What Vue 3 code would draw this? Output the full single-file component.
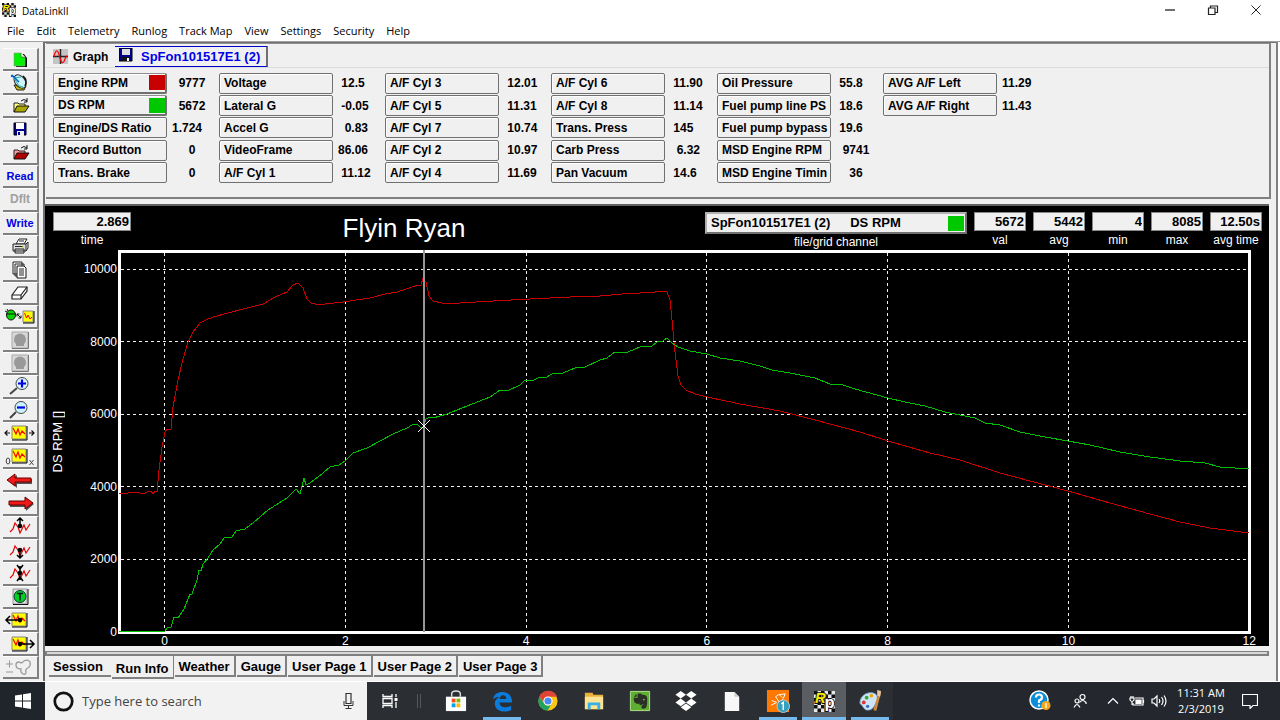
<script setup>
const menus = ['File', 'Edit', 'Telemetry', 'Runlog', 'Track Map', 'View', 'Settings', 'Security', 'Help']

const trace = (x, y) =>
  `<path d="M${x} ${y}h14v13h-14z" fill="#ff0" stroke="#888"/><path d="M${x + 15} ${y}v14h-15" fill="none" stroke="#000"/><path d="M${x + 1} ${y + 2}l3 6 2-5 2 6 2-4 3 3" fill="none" stroke="#f00" stroke-width="1.2"/>`
const folder = (body, lid) =>
  `<path d="M12 17V8h4l1 1h6v3" fill="${lid}" stroke="#222"/><path d="M12 17l3-6h12l-4 6z" fill="${body}" stroke="#111"/><path d="M19 6q3-3 6 0M25 3v4h-3" fill="none" stroke="#111"/>`
const stamp =
  '<path d="M10 3h16v16H10z" fill="#d8d8d8" stroke="#aaa"/><path d="M26.500 3v16.500H10" fill="none" stroke="#777"/><circle cx="18" cy="10.500" r="6" fill="#999"/><path d="M14 14h8v3h-8z" fill="#999"/>'
const wave = '<path d="M8 16l3-3 2-6 3 4 2 6 4-8 2 5 4-6" fill="none" stroke="#e00000" stroke-width="1.200"/>'

const tools = [
  { name: 'New', art: '<path d="M14 6h8l3 4v9H14z" fill="#111"/><path d="M12 5h7l4 4v9H12z" fill="#00f000" stroke="#999" stroke-width=".6"/><path d="M19 5v4h4" fill="#fff" stroke="#444" stroke-width=".6"/>' },
  { name: 'Telemetry link', art: '<path d="M12 13l3 5h7l2-4z" fill="#c6b800" stroke="#222"/><ellipse cx="18" cy="9.500" rx="7.500" ry="5" transform="rotate(52 18 9.500)" fill="#cdf6f8" stroke="#222"/><path d="M12 6l5 8 4 1M12 6l7-1" fill="none" stroke="#2aa"/><path d="M10 3l7 7" stroke="#06c" stroke-width="1.500"/><circle cx="10" cy="4" r="1.200" fill="#06c"/><path d="M21 4q5 4 2 10" fill="none" stroke="#111" stroke-width="1.500"/>' },
  { name: 'Open', art: folder('#a9a800', '#ffff80') },
  { name: 'Save', art: '<path d="M12 5h12v12H12z" fill="#00008b" stroke="#000"/><path d="M14 5h8v6h-8z" fill="#fff"/><path d="M15 13h7v5h-7z" fill="#eee"/><path d="M16 14h2v3h-2z" fill="#00008b"/>' },
  { name: 'Close file', art: folder('#b00000', '#ff9c9c') },
  { text: 'Read' },
  { text: 'Dflt', off: true },
  { text: 'Write' },
  { name: 'Print', art: '<path d="M14 9l3-5h8l-3 5z" fill="#fff" stroke="#222"/><path d="M11 9h13v7H11z" fill="#ddd" stroke="#222"/><path d="M24 9l2-2v6l-2 3M13 14h9v4h-9zM17 6h5M13 11.500h8" fill="none" stroke="#222"/><path d="M20 12h2" stroke="#dd0"/>' },
  { name: 'Copy pages', art: '<path d="M11 3h9v12h-9zM13 5h9v12h-9z" fill="#fff" stroke="#222"/><path d="M15 7h7l2 2v10h-9z" fill="#fff" stroke="#111"/><path d="M17 10h5M17 12h5M17 14h5M17 16h5" stroke="#222"/>' },
  { name: 'Erase', art: '<path d="M10 13l6-8h9v4l-6 8h-9z" fill="#fff" stroke="#222" stroke-width="1.200"/><path d="M10 13h9l6-8M19 13v4" fill="none" stroke="#222" stroke-width="1.200"/>' },
  { name: 'Device to graph', art: '<ellipse cx="9" cy="10" rx="4.500" ry="5" fill="#00d800" stroke="#111"/><path d="M4 9h10M5 4l1 2M3 6l2 1" stroke="#111"/><path d="M15 9l4 4M15 11.500V9h2.500M19 10.500V13h-2.500" fill="none" stroke="#111"/><path d="M21 6h10v11H21z" fill="#ff0" stroke="#888"/><path d="M32 6v12H21" fill="none" stroke="#000"/><path d="M22.500 8l2 5 1.500-3 2 4 2-2" fill="none" stroke="#f00"/>' },
  { name: 'Stamp one', off: true, art: stamp },
  { name: 'Stamp two', off: true, art: stamp },
  { name: 'Zoom in', art: '<path d="M15 13l-7 6" stroke="#444" stroke-width="2"/><circle cx="20" cy="8.500" r="6" fill="#d8f5ff" stroke="#444"/><path d="M16 8.500h8M20 4.500v8" stroke="#0000e0" stroke-width="2.200"/>' },
  { name: 'Zoom out', art: '<path d="M14 13l-6 6" stroke="#444" stroke-width="2"/><circle cx="19" cy="8.500" r="6" fill="#c9f4ff" stroke="#444"/><path d="M15 8.500h8" stroke="#0000e0" stroke-width="2.200"/>' },
  { name: 'Fit width', art: trace(10, 4) + '<path d="M3 11h5M5.500 8.500L3 11l2.500 2.500M27 11h5M29.500 8.500L32 11l-2.500 2.500" fill="none" stroke="#111" stroke-width="1.200"/>' },
  { name: 'Range from zero', art: trace(10, 3) + '<ellipse cx="6" cy="15" rx="1.800" ry="3" fill="none" stroke="#444"/><path d="M27.500 14l4 5M31.500 14l-4 5" stroke="#444"/>' },
  { name: 'Back', art: '<path d="M7 12l8-6v4h15v5H15v4z" fill="#555"/><path d="M5 11l8-6v4h16v4H13v4z" fill="#f01818" stroke="#600"/>' },
  { name: 'Forward', art: '<path d="M32 12l-8-6v4H8v5h16v4z" fill="#555"/><path d="M31 11l-8-6v4H7v4h16v4z" fill="#f01818" stroke="#600"/>' },
  { name: 'Move up', art: wave + '<path d="M18 11V2M15 5l3-3 3 3" fill="none" stroke="#000" stroke-width="1.500"/><circle cx="18" cy="10" r="2.300"/>' },
  { name: 'Move down', art: wave + '<path d="M18 10v9M15 16l3 3 3-3" fill="none" stroke="#000" stroke-width="1.500"/><circle cx="18" cy="11" r="2.300"/>' },
  { name: 'Squeeze', art: wave + '<path d="M18 4v14M15 3l3 4 3-4M15 19l3-4 3 4" fill="none" stroke="#000" stroke-width="1.500"/><circle cx="18" cy="11" r="2.300"/>' },
  { name: 'Timer', art: '<path d="M11 3h14v15H11z" fill="#ddd" stroke="#999"/><path d="M26 3v15.500H11" fill="none" stroke="#111"/><circle cx="18" cy="10.500" r="6" fill="#00d020" stroke="#033"/><path d="M15 7.500h6M18 7.500v7" stroke="#012" stroke-width="1.500"/>' },
  { name: 'Shift left', art: trace(10, 4) + '<path d="M18 11H4M8 7l-4 4 4 4" fill="none" stroke="#000" stroke-width="1.500"/><circle cx="18" cy="11" r="2.300"/>' },
  { name: 'Shift right', art: trace(10, 4) + '<path d="M18 11h13M28 7l4 4-4 4" fill="none" stroke="#000" stroke-width="1.500"/><circle cx="18" cy="11" r="2.300"/>' },
  { name: 'Track outline', off: true, art: '<path d="M4 8h7M7.500 4.500v7M4 16h7" stroke="#999"/><path d="M14 9q0-3 3-3 3 2 5-1 4-2 6 1 1 4-2 6-3 1-2 4 0 3-3 2-3-2-2-5-5 0-5-4z" fill="none" stroke="#999" stroke-width="1.300"/>' }
]

const channels = [
  [['Engine RPM', '  9777', '#c80000'], ['DS RPM', '  5672', '#00c800'], ['Engine/DS Ratio', '1.724'], ['Record Button', '     0'], ['Trans. Brake', '     0']],
  [['Voltage', ' 12.5'], ['Lateral G', ' -0.05'], ['Accel G', '  0.83'], ['VideoFrame', '86.06'], ['A/F Cyl 1', ' 11.12']],
  [['A/F Cyl 3', ' 12.01'], ['A/F Cyl 5', ' 11.31'], ['A/F Cyl 7', ' 10.74'], ['A/F Cyl 2', ' 10.97'], ['A/F Cyl 4', ' 11.69']],
  [['A/F Cyl 6', ' 11.90'], ['A/F Cyl 8', ' 11.14'], ['Trans. Press', ' 145'], ['Carb Press', '  6.32'], ['Pan Vacuum', ' 14.6']],
  [['Oil Pressure', ' 55.8'], ['Fuel pump line PS', ' 18.6'], ['Fuel pump bypass', ' 19.6'], ['MSD Engine RPM', '  9741'], ['MSD Engine Timin', '    36']],
  [['AVG A/F Left', '11.29'], ['AVG A/F Right', '11.43']]
]

const readouts = [['val', '5672'], ['avg', '5442'], ['min', '4'], ['max', '8085'], ['avg time', '12.50s']]

const view = { x: 118, y: 250, w: 1133, h: 384 }
const timeX = (t) => 164.5 + t * 90.4
const rpmY = (r) => 631.5 - r * 0.03625
const times = [0, 2, 4, 6, 8, 10, 12]
const rpms = [0, 2000, 4000, 6000, 8000, 10000]
const left = (t) => ({ left: ((timeX(t) - view.x) / view.w) * 100 + '%' })
const top = (r) => ({ top: ((rpmY(r) - view.y) / view.h) * 100 + '%' })

const engine =
  '119,493 126,494 130,492 134,493 137,492 143,494 147,492 151,491 153,494 155,491 157,492 159,470 162,447 165,432 167,429 171,429 173,407 178,380 183,359 188,342 193,332 200,323 206,320 213,317 228,313 243,309 255,306 263,304 275,297 287,292 293,285 298,283 303,288 307,299 311,303 315,304 325,304 343,302 370,298 385,294 397,292 415,286 421,285 423,278 426,282 429,296 433,301 442,303 460,303 493,301 530,299 570,297 600,296 622,294 640,293 655,292 663,291 667,292 670,300 672,320 675,352 678,376 681,385 686,390 695,394 707,397 740,404 780,411 815,420 860,432 888,441 930,453 960,460 1000,473 1030,481 1068,491 1110,503 1150,514 1180,522 1210,528 1249,533'
const driveshaft =
  '119,631 165,631 167,628 171,627 174,617 178,618 184,609 190,594 192,594 197,580 199,570 201,571 203,564 208,558 213,550 220,544 224,538 232,537 236,531 245,529 253,523 268,510 287,498 296,489 300,494 304,478 306,485 310,483 323,473 330,467 339,465 345,461 353,453 367,448 393,434 407,428 412,425 417,424 421,428 423,427 426,419 430,417 433,418 447,414 467,406 490,397 500,390 507,391 520,385 524,381 534,380 540,377 545,378 552,374 563,373 575,368 585,367 600,360 607,358 615,352 628,352 640,347 652,346 657,342 663,341 667,338 672,343 678,347 690,351 707,354 720,358 740,361 760,366 772,370 790,373 815,378 830,384 840,384 855,389 888,398 905,402 925,406 945,412 975,418 985,423 1000,425 1020,432 1045,437 1068,441 1090,445 1120,452 1150,457 1180,461 1205,463 1220,467 1235,468 1249,469'

const pages = ['Session', 'Run Info', 'Weather', 'Gauge', 'User Page 1', 'User Page 2', 'User Page 3']

const apps = [
  { name: 'Microsoft Store', art: '<path d="M2 8h21v15H2z" fill="#fff"/><path d="M8 8V5q0-3 4.500-3T17 5v3" fill="none" stroke="#ddd" stroke-width="1.500"/><path d="M8 10h4v4H8z" fill="#f25022"/><path d="M13 10h4v4h-4z" fill="#7fba00"/><path d="M8 15h4v4H8z" fill="#00a4ef"/><path d="M13 15h4v4h-4z" fill="#ffb900"/>' },
  { name: 'Edge', open: true, art: '<path d="M3 11C4 5 8 3 13 3c6 0 10 4 10 11H10c0 4 3 5 6 5 2 0 4-.5 6-1.500V22c-2 1-4 1.500-7 1.500C9 23.500 5 20 5 15c0-3 2-6 6-7-4 0-6 1-8 3zm7-.5h7c0-3-1.500-4-3.500-4S10.500 8 10 10.500z" fill="#0b7bdc"/>' },
  { name: 'Chrome', art: '<circle cx="12.500" cy="12.500" r="10" fill="#fbc716"/><path d="M3.500 8A10 10 0 0 1 22 8h-9.500a4.500 4.500 0 0 0-4 6.500z" fill="#e04436"/><path d="M3.500 8A10 10 0 0 0 12 22.500l4.500-7.500a4.500 4.500 0 0 1-8 0z" fill="#1ea362"/><circle cx="12.500" cy="12.500" r="4.800" fill="#fff"/><circle cx="12.500" cy="12.500" r="3.700" fill="#4a8af4"/>' },
  { name: 'File Explorer', art: '<path d="M3 4h8l1 2h10v15H3z" fill="#e8b13a"/><path d="M3 8h19v13H3z" fill="#ffe394"/><path d="M6 21v-7h13v7h-3v-4H9v4z" fill="#36b0e6"/>' },
  { name: 'Evernote', art: '<path d="M2.500 2.500h20v20h-20z" fill="#5fae33" stroke="#b4e48e"/><path d="M10 5c3-1 4 0 5 1 3 0 5 1 5 4 0 4 0 7-1 9-1 2-5 2-5 0 0-2 1-2.500 3-2.500-1-1-3 0-4 .5-1 0-1-1-1-2-1 1-4 0-5-1-1-2-1-3-1-5h4z" fill="#2b3026"/><path d="M6 8l3-3v3z" fill="#2b3026"/><circle cx="16.500" cy="11" r=".9" fill="#7fc04f"/>' },
  { name: 'Dropbox', art: '<path d="M7 2l5.500 4L7 10 1.500 6zM18 2l5.500 4-5.500 4-5.500-4zM7 10l5.500 4L7 18l-5.500-4zM18 10l5.500 4-5.500 4-5.500-4zM7 19l5.500-4 5.500 4-5.500 4z" fill="#fff"/>' },
  { name: 'Document', art: '<path d="M5 3h10l5 5v15H5z" fill="#f8f8f8"/><path d="M15 3v5h5" fill="#ccc"/>' },
  { name: 'Racing tool', open: true, art: '<path d="M1 1h23v23H1z" fill="#ff7800"/><path d="M5 17l6-3M6 12l5 2M10 8l4 6M10 8l3-2 7-1-2 5-4 4M14 6l3 3" fill="none" stroke="#fff"/><circle cx="18" cy="18" r="6.500" fill="#36a0c0" stroke="#cde" stroke-width=".8"/><path d="M16 15.500l2-1.500v8" fill="none" stroke="#fff" stroke-width="1.500"/>' },
  { name: 'DataLink', open: true, current: true, logo: true },
  { name: 'Paint', open: true, art: '<path d="M2 15C2 7 9 3 15 4c6 1 6 6 4 10-2 3-3 8-9 8-4 0-4-4-8-7z" fill="#cfe4f4" stroke="#7da6c4"/><circle cx="6" cy="14" r="2" fill="#d33"/><circle cx="9" cy="9" r="2" fill="#3a3"/><circle cx="14" cy="7" r="1.800" fill="#e9a400"/><circle cx="10" cy="18" r="1.700" fill="#36c"/><path d="M22 2l2 2-5 19-3-1z" fill="#c88a3e"/><path d="M20 1l4 1-1 6-3-1z" fill="#eac9a0"/>' }
]
const squares = Array.from({ length: 36 }, (_, i) => i).filter((i) => ((i % 6) + Math.floor(i / 6)) % 2 === 0)
</script>

<template>
  <div class="screen">
    <header class="title-bar">
      <svg class="logo" viewBox="0 0 24 24" aria-hidden="true">
        <path d="M0 0h24v24H0z" fill="#e8e8e8" />
        <rect v-for="s in squares" :key="s" :x="(s % 6) * 4" :y="Math.floor(s / 6) * 4" width="4" height="4" fill="#111" />
        <text x="1" y="14" class="rp rp-r">R</text>
        <text x="12" y="19" class="rp rp-p">p</text>
      </svg>
      <span class="app-name">DataLinkII</span>
      <div class="window-buttons">
        <button aria-label="Minimize"><svg viewBox="0 0 12 12"><path d="M1 6h10" stroke="#222" stroke-width="1.300" /></svg></button>
        <button aria-label="Restore"><svg viewBox="0 0 12 12"><path d="M1.500 4h6.500v6.500H1.500zM3.500 4V2h7v6.500H8" fill="none" stroke="#222" stroke-width="1.200" /></svg></button>
        <button aria-label="Close"><svg viewBox="0 0 12 12"><path d="M1.500 1.500l9 9M10.500 1.500l-9 9" stroke="#222" /></svg></button>
      </div>
    </header>

    <nav class="menu">
      <button v-for="m in menus" :key="m">{{ m }}</button>
    </nav>

    <div class="body">
      <aside class="tools">
        <button v-for="(t, i) in tools" :key="i" :class="{ off: t.off }" :aria-label="t.text || t.name">
          <template v-if="t.text">{{ t.text }}</template>
          <svg v-else viewBox="0 0 36 22" v-html="t.art" />
        </button>
      </aside>

      <main class="work">
        <section class="channels">
          <div class="files">
            <button class="graph-tab">
              <svg viewBox="0 0 16 16"><path d="M0 0h16v16H0z" fill="#c4c4c4" /><path d="M8 0v16M0 8h16" stroke="#222" stroke-width="1.500" /><path d="M1 8q3-12 6 0 3 12 6 2l2-3" fill="none" stroke="#f00" stroke-width="1.300" /></svg>
              Graph
            </button>
            <button class="file-tab">
              <svg viewBox="0 0 14 14"><path d="M0 0h13v13H0z" fill="#00008b" stroke="#000" /><path d="M3 1h8v6H3z" fill="#ddd" /><path d="M3 9h8v4H3z" fill="#111" /><path d="M8 10h2v3H8z" fill="#fff" /></svg>
              SpFon101517E1 (2)
            </button>
          </div>
          <div class="channel-grid">
            <div v-for="(col, c) in channels" :key="c" class="channel-col">
              <div v-for="ch in col" :key="ch[0]" class="channel">
                <button :class="{ lit: ch[2] }">
                  <span class="clip">{{ ch[0] }}</span>
                  <span v-if="ch[2]" class="swatch" :style="{ background: ch[2] }"></span>
                </button>
                <span class="value">{{ ch[1] }}</span>
              </div>
            </div>
          </div>
        </section>

        <section class="graph">
          <div class="graph-head">
            <label class="readout time"><input readonly value="2.869" /><span>time</span></label>
            <h1>Flyin Ryan</h1>
            <div class="picker">
              <button id="grid-channel"><span>SpFon101517E1 (2)</span><span>DS RPM</span><span class="swatch green"></span></button>
              <label for="grid-channel">file/grid channel</label>
            </div>
            <label v-for="r in readouts" :key="r[0]" class="readout"><input readonly :value="r[1]" /><span>{{ r[0] }}</span></label>
          </div>
          <div class="plot-area">
            <div class="y-axis">
              <span class="y-title">DS RPM []</span>
              <span v-for="r in rpms" :key="r" class="y-tick" :style="top(r)">{{ r }}</span>
            </div>
            <div class="plot">
              <svg :viewBox="`${view.x} ${view.y} ${view.w} ${view.h}`" preserveAspectRatio="none" role="img" aria-label="RPM over time">
                <path d="M119.500 251.500H1249.500V632.500H119.500z" class="frame" />
                <g class="grid">
                  <path v-for="r in rpms.slice(1)" :key="r" :d="`M121 ${Math.floor(rpmY(r)) + 0.5}H1248`" />
                  <path v-for="t in times.slice(0, 6)" :key="t" :d="`M${Math.floor(timeX(t)) + 0.5} 253V631`" />
                </g>
                <polyline :points="engine" class="line engine" />
                <polyline :points="driveshaft" class="line driveshaft" />
                <path d="M424 250V632" class="cursor" />
                <path d="M418 420l12 12M430 420l-12 12" class="cross" />
              </svg>
            </div>
            <div class="x-axis">
              <span v-for="t in times" :key="t" class="x-tick" :style="left(t)">{{ t }}</span>
            </div>
          </div>
        </section>

        <div class="groove"></div>
        <nav class="pages">
          <button v-for="(p, i) in pages" :key="p" :class="{ active: i === 1 }">{{ p }}</button>
        </nav>
      </main>
      <div class="edge"></div>
    </div>

    <footer class="taskbar">
      <button class="start" aria-label="Start">
        <svg viewBox="0 0 16 16"><path d="M0 2.500l7-1V7.500H0zM8 1.300L16 0v7.500H8zM0 8.500h7v6l-7-1zM8 8.500h8V16l-8-1.200z" fill="#fff" /></svg>
      </button>
      <div class="search">
        <svg class="ring" viewBox="0 0 20 20"><circle cx="10" cy="10" r="8.300" fill="none" stroke="#111" stroke-width="2.600" /></svg>
        <input aria-label="Search" placeholder="Type here to search" />
        <svg class="mic" viewBox="0 0 12 18"><path d="M3.500 1.500h5v10h-5z" fill="none" stroke="#333" stroke-width="1.200" /><path d="M1.500 9v4.500h9V9M6 13.500v3M3 16.500h6" fill="none" stroke="#333" /></svg>
      </div>
      <button class="task-view" aria-label="Task View">
        <svg viewBox="0 0 18 18"><path d="M2 2v2.500h9V2M2 16v-2.500h9V16M2 6.500h9v5H2zM15 2v3M15 10v6" fill="none" stroke="#fff" stroke-width="1.300" /><path d="M13.500 6h3v3h-3z" fill="#fff" /></svg>
      </button>
      <span class="divider"></span>
      <button v-for="a in apps" :key="a.name" class="app" :class="{ open: a.open, current: a.current }" :aria-label="a.name">
        <svg v-if="a.logo" viewBox="0 0 24 24">
          <path d="M0 0h24v24H0z" fill="#e8e8e8" />
          <rect v-for="s in squares" :key="s" :x="(s % 6) * 4" :y="Math.floor(s / 6) * 4" width="4" height="4" fill="#111" />
          <text x="1" y="14" class="rp rp-r">R</text>
          <text x="12" y="19" class="rp rp-p">p</text>
        </svg>
        <svg v-else viewBox="0 0 25 25" v-html="a.art" />
      </button>
      <div class="tray">
        <button class="help" aria-label="Help">
          <svg viewBox="0 0 22 22"><circle cx="10" cy="10" r="9" fill="#0a8ed8" stroke="#fff" stroke-width="1.500" /><path d="M7 7.500q0-3 3-3t3 3q0 2-3 3v2.500M10 14.500v2" fill="none" stroke="#fff" stroke-width="2.200" /><circle cx="17" cy="15.500" r="4.500" fill="#f5a71b" stroke="none" /><path d="M17 13v5" stroke="#fff" stroke-width="1.300" /></svg>
        </button>
        <button class="people" aria-label="People">
          <svg viewBox="0 0 14 16"><circle cx="9.500" cy="4" r="2.500" /><circle cx="4" cy="8" r="2" /><path d="M6.500 9.500q3-4 6.500 0v1.500M1 14.500q3-6 6 0" /></svg>
        </button>
        <button class="more" aria-label="Show hidden icons"><svg viewBox="0 0 12 12"><path d="M1 8.500l5-5 5 5" /></svg></button>
        <button class="battery" aria-label="Battery"><svg viewBox="0 0 16 12"><path d="M6 3h8v7H4V8" /><path d="M7 5h5v3.500H7z" fill="#fff" /><path d="M14.500 5v3M1 3h4v2q-2 3-4 0zM2 1v2M4 1v2M3 7v3" /></svg></button>
        <button class="sound" aria-label="Volume"><svg viewBox="0 0 16 14"><path d="M1 5h2l3-3v10L3 9H1zM8 5q1.500 2 0 4M10.500 3q3 4 0 8M13 1.500q4 5.500 0 11" /></svg></button>
        <div class="clock"><span>11:31 AM</span><span>2/3/2019</span></div>
        <button class="notes" aria-label="Notifications"><svg viewBox="0 0 16 16"><path d="M.5 1.500h15v11H11l-3 3v-3H.5z" /></svg></button>
      </div>
    </footer>
  </div>
</template>

<style>
body { margin: 0; }
</style>

<style scoped>
* { box-sizing: border-box; }
button { margin: 0; padding: 0; border: 0; background: none; color: inherit; font: inherit; text-align: left; white-space: nowrap; }
svg { display: block; flex: none; }
.screen { display: flex; flex-direction: column; height: 100vh; overflow: hidden; background: #fff; color: #000; font: 12px "Liberation Sans", Arial, sans-serif; }

.title-bar { display: flex; align-items: center; height: 20px; padding: 0 3px 0 2px; font: 10px "Open Sans", sans-serif; }
.logo { width: 14px; height: 14px; }
.rp { font-family: "Liberation Sans", Arial, sans-serif; font-weight: bold; stroke: #111; stroke-width: 2; paint-order: stroke; }
.rp-r { fill: #f5ea00; font-size: 17px; font-style: italic; }
.rp-p { fill: #fff; font-size: 19px; }
.app-name { flex: 1; padding: 2px 0 0 6px; }
.window-buttons { display: flex; }
.window-buttons button { display: flex; align-items: center; justify-content: center; width: 43px; height: 20px; }
.window-buttons svg { width: 12px; height: 12px; }

.menu { display: flex; align-items: center; gap: 12px; height: 21px; padding-left: 7px; font: 11px "Open Sans", sans-serif; }

.body { display: flex; flex: 1; min-height: 0; background: #f0f0f0; border-top: 1px solid #a0a0a0; border-bottom: 1px solid #fff; }
.tools { display: flex; flex-direction: column; width: 43px; padding: 6px 4px 2px 3px; }
.tools button { display: flex; flex: 1; align-items: center; justify-content: center; min-height: 0; border-top: 1px solid #fff; border-right: 2px solid #808080; border-bottom: 2px solid #808080; color: #0000e0; font-weight: bold; font-size: 11px; }
.tools button.off { color: #a0a0a0; font-size: 12px; }
.tools svg { width: 36px; height: 22px; }

.work { display: flex; flex: 1; flex-direction: column; min-width: 0; padding-right: 5px; border-left: 2px solid #707070; border-top: 1px solid #707070; }
.edge { width: 4px; border-left: 2px solid #808080; background: #fff; }

.channels { margin-left: 1px; padding-bottom: 13px; border-right: 2px solid #808080; border-bottom: 2px solid #808080; border-top: 1px solid #909090; }
.files { display: flex; height: 24px; padding: 2px 0 0 3px; border-bottom: 1px solid #dcdcdc; font-weight: bold; }
.files button { display: flex; align-items: center; }
.graph-tab { gap: 5px; width: 66px; padding-left: 4px !important; }
.graph-tab svg { width: 15px; height: 15px; }
.file-tab { gap: 8px; padding: 0 6px 0 4px !important; border: 1px solid #0000d0 !important; border-left: 0 !important; border-right: 2px solid #707070 !important; color: #0000e8; font-size: 13px !important; }
.file-tab svg { width: 14px; height: 14px; margin-bottom: 4px; }
.channel-grid { display: flex; padding: 4px 0 0 7px; font-weight: bold; }
.channel-col { display: grid; grid-template-rows: repeat(5, 1fr); width: 166px; height: 112px; }
.channel { display: flex; align-items: center; }
.channel button { display: flex; align-items: center; width: 114px; height: 21px; padding: 0 2px 0 4px; border: 1px solid #707070; border-radius: 2px; box-shadow: inset 1px 1px #fff; }
.channel button.lit { border-color: #909090; border-right: 2px solid #707070; border-bottom: 2px solid #707070; padding-right: 0; }
.clip { flex: 1; overflow: hidden; }
.swatch { width: 16px; height: 15px; background: #00c800; }
.value { padding-left: 5px; white-space: pre; }

.graph { display: flex; flex: 1; flex-direction: column; min-height: 0; margin: 5px 2px 0 0; background: #000; color: #fff; border-top: 2px solid #606060; }
.graph-head { display: flex; align-items: flex-start; gap: 7px; height: 44px; padding: 6px 7px 0 8px; }
.readout { display: flex; flex-direction: column; align-items: center; gap: 2px; width: 52px; line-height: 14px; white-space: nowrap; }
.readout.time { width: 78px; }
.readout input { width: 100%; height: 19px; padding: 0 1px; border: 1px solid #888; border-radius: 0; background: #f0f0f0; font: bold 13px "Liberation Sans", Arial, sans-serif; text-align: right; }
h1 { flex: 1; margin: 0; padding-right: 28px; font-size: 26px; font-weight: normal; line-height: 32px; text-align: center; }
.picker { display: flex; flex-direction: column; align-items: center; gap: 1px; width: 262px; line-height: 14px; }
.picker button { display: flex; align-items: center; gap: 20px; width: 100%; height: 22px; padding: 0 1px 0 4px; border: 2px solid #b0b0b0; border-right-color: #707070; border-bottom-color: #707070; background: #f0f0f0; color: #000; font-size: 13px; font-weight: bold; }
.picker .swatch { margin-left: auto; }
.plot-area { display: grid; flex: 1; grid-template: minmax(0, 1fr) 12px / 73px minmax(0, 1fr) 18px; min-height: 0; }
.y-axis { position: relative; display: flex; align-items: center; padding-left: 6px; }
.y-title { writing-mode: vertical-rl; transform: rotate(180deg); font-size: 13px; line-height: 14px; }
.y-tick { position: absolute; right: 1px; line-height: 14px; transform: translateY(-50%); }
.plot { min-height: 0; }
.plot svg { width: 100%; height: 100%; shape-rendering: crispEdges; }
.frame { fill: none; stroke: #fff; stroke-width: 3; }
.grid { fill: none; stroke: #f0f0f0; stroke-width: 1; stroke-dasharray: 3 3; }
.line { fill: none; stroke-width: 1; }
.engine { stroke: #c80000; }
.driveshaft { stroke: #00c000; }
.cursor { stroke: #969696; stroke-width: 2; }
.cross { fill: none; stroke: #fff; }
.x-axis { position: relative; grid-column: 2; }
.x-tick { position: absolute; top: 0; line-height: 14px; transform: translateX(-50%); }

.groove { height: 5px; margin: 5px 2px 0 0; border: 2px solid #808080; border-top-width: 1px; background: #d8d8d8; }
.pages { display: flex; align-items: flex-start; gap: 1px; height: 25px; padding-left: 4px; font-size: 13px; font-weight: bold; }
.pages button { height: 21px; padding: 1px 4px 0; border-right: 2px solid #808080; border-bottom: 2px solid #808080; }
.pages button:first-child { padding-right: 8px; border-right: 0; }
.pages button.active { height: 23px; padding-top: 3px; border-right: 1px solid #808080; }

.taskbar { display: flex; align-items: stretch; height: 38px; background: #2b2e33; color: #fff; }
.taskbar button { display: flex; align-items: center; justify-content: center; }
.start { width: 45px; background: #1f252b !important; }
.start svg { width: 16px; height: 16px; }
.search { display: flex; align-items: center; width: 322px; padding: 0 12px 0 8px; background: #f2f2f2; }
.ring { width: 21px; height: 21px; }
.search input { flex: 1; min-width: 0; padding: 0 8px; border: 0; background: none; font: 13px "Open Sans", sans-serif; }
.search input::placeholder { color: #444; opacity: 1; }
.mic { width: 13px; height: 18px; }
.task-view { width: 46px; }
.task-view svg { width: 18px; height: 18px; }
.divider { width: 4px; height: 14px; margin: 12px 12px 0 4px; border: 1px solid #55585c; border-width: 0 1px; }
.app { width: 38px; margin: 0 4px !important; border-top: 3px solid transparent !important; border-bottom: 3px solid transparent !important; }
.app.open { border-bottom-color: #76b9ed !important; }
.app.current { width: 44px; margin: 0 1px !important; border-top-color: #5a5d61 !important; background: #5a5d61; }
.app svg { width: 24px; height: 24px; }
.app.current svg { width: 21px; height: 21px; }
.tray { display: flex; flex: 1; align-items: stretch; justify-content: flex-end; background: #24282e; }
.tray svg { fill: none; stroke: #fff; stroke-width: 1.2; }
.help svg { width: 22px; height: 22px; }
.help { width: 40px; }
.people { width: 40px; }
.people svg { width: 14px; height: 16px; }
.more { width: 26px; }
.more svg { width: 12px; height: 12px; }
.battery, .sound { width: 22px; }
.battery svg { width: 16px; height: 12px; }
.sound svg { width: 16px; height: 14px; }
.clock { display: flex; flex-direction: column; align-items: center; justify-content: center; width: 62px; font: 11px "Open Sans", sans-serif; line-height: 16px; white-space: nowrap; }
.notes { width: 36px; margin-right: 12px !important; }
.notes svg { width: 16px; height: 16px; }
</style>
